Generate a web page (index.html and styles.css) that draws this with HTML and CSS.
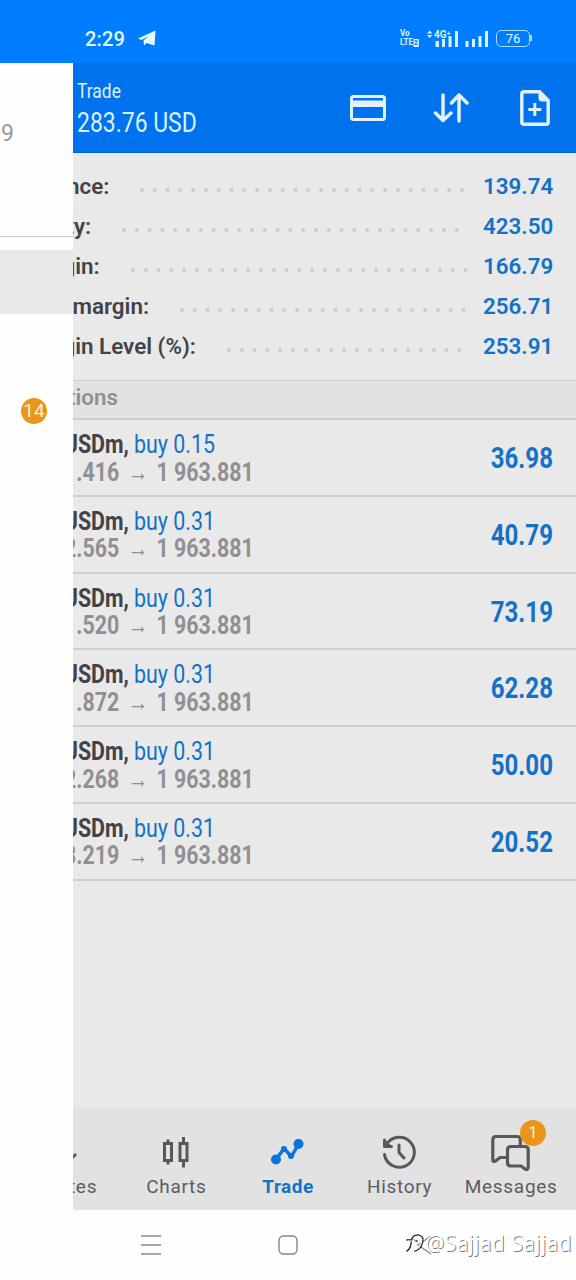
FILE: index.html
```html
<!DOCTYPE html>
<html lang="en">
<head>
    <meta charset="UTF-8">
    <meta name="viewport" content="width=device-width, initial-scale=1.0">
    <title>Trade</title>
    <link rel="stylesheet" href="styles.css">
</head>
<body>
    <div class="phone">
        <div class="status-bar">
            <span class="clock">2:29</span>
            <svg class="telegram" width="18" height="17" viewBox="0 0 18 17"><path d="M0 8.500 17.500 0.500 16.500 15.500 8.500 13 6 15.500 5.500 10.500 11 6 3.500 10Z" fill="#e4fbff"/></svg>
            <div class="status-icons">
                <div class="volte"><span>Vo</span><span>LTE<b>2</b></span></div>
                <svg width="32" height="18" viewBox="0 0 32 18" fill="#d4f4ff">
                    <path d="M0 3.500 2.700 0.500 5.400 3.500ZM0 5 2.700 8 5.400 5Z"/>
                    <text x="7" y="8" class="net">4G⁺</text>
                    <path d="M8.500 11h3.500v6h-3.500zM15 9h3v8h-3zM21.500 6h3v11h-3zM28 1h3v16h-3z"/>
                </svg>
                <svg class="signal" width="24" height="18" viewBox="0 0 24 18" fill="#d4f4ff">
                    <path d="M0.500 11h3v6h-3zM7 9h3v8h-3zM13.500 6h3v11h-3zM20 1h3v16h-3z"/>
                </svg>
                <div class="battery">76</div>
            </div>
        </div>

        <header class="app-bar">
            <div class="title">
                <span class="title-name">Trade</span>
                <span class="title-sum">283.76 USD</span>
            </div>
            <div class="actions">
                <svg width="36" height="28" viewBox="0 0 36 28"><rect x="1.500" y="2.500" width="33" height="23" rx="2" fill="none" stroke="#e2f1ff" stroke-width="3"/><path d="M2 6.500h32v6.500H2z" fill="#e2f1ff"/></svg>
                <svg width="36" height="32" viewBox="0 0 36 32" fill="none" stroke="#e2f1ff" stroke-width="3.500" stroke-linecap="round" stroke-linejoin="round"><path d="M10 3V28.500M2.500 21 10 28.500 18 21M26 29V3M18.500 11 26 3 34 11"/></svg>
                <svg class="new-order" width="30" height="36" viewBox="0 0 30 36"><path d="M4 1.800H19.500L28.200 10.500V32Q28.200 34.200 26 34.200H4Q1.800 34.200 1.800 32V4Q1.800 1.800 4 1.800Z" fill="none" stroke="#e2f1ff" stroke-width="3.400"/><path d="M18.500 2 28 11.500H22Q18.500 11.500 18.500 8Z" fill="#e2f1ff"/><path d="M14.800 13v13M8.300 19.500h13" stroke="#e2f1ff" stroke-width="3"/></svg>
            </div>
        </header>

        <main class="content">
            <section class="summary">
                <div class="summary-row"><span>Balance:</span><i class="dots"></i><b>139.74</b></div>
                <div class="summary-row"><span>Equity:</span><i class="dots"></i><b>423.50</b></div>
                <div class="summary-row"><span>Margin:</span><i class="dots"></i><b>166.79</b></div>
                <div class="summary-row"><span>Free margin:</span><i class="dots"></i><b>256.71</b></div>
                <div class="summary-row"><span>Margin Level (%):</span><i class="dots"></i><b>253.91</b></div>
            </section>

            <h2 class="section-title">tions</h2>

            <section class="positions">
                <div class="position">
                    <div class="deal">
                        <div class="symbol">XAUUSDm, <span>buy 0.15</span></div>
                        <div class="price">1 961.416 <i>→</i> 1 963.881</div>
                    </div>
                    <div class="profit">36.98</div>
                </div>
                <div class="position">
                    <div class="deal">
                        <div class="symbol">XAUUSDm, <span>buy 0.31</span></div>
                        <div class="price">1 962.565 <i>→</i> 1 963.881</div>
                    </div>
                    <div class="profit">40.79</div>
                </div>
                <div class="position">
                    <div class="deal">
                        <div class="symbol">XAUUSDm, <span>buy 0.31</span></div>
                        <div class="price">1 961.520 <i>→</i> 1 963.881</div>
                    </div>
                    <div class="profit">73.19</div>
                </div>
                <div class="position">
                    <div class="deal">
                        <div class="symbol">XAUUSDm, <span>buy 0.31</span></div>
                        <div class="price">1 961.872 <i>→</i> 1 963.881</div>
                    </div>
                    <div class="profit">62.28</div>
                </div>
                <div class="position">
                    <div class="deal">
                        <div class="symbol">XAUUSDm, <span>buy 0.31</span></div>
                        <div class="price">1 962.268 <i>→</i> 1 963.881</div>
                    </div>
                    <div class="profit">50.00</div>
                </div>
                <div class="position">
                    <div class="deal">
                        <div class="symbol">XAUUSDm, <span>buy 0.31</span></div>
                        <div class="price">1 963.219 <i>→</i> 1 963.881</div>
                    </div>
                    <div class="profit">20.52</div>
                </div>
            </section>
        </main>

        <nav class="tabs">
            <div class="tab">
                <svg width="40" height="40" viewBox="0 0 40 40" fill="none" stroke="#58585a" stroke-width="3"><path d="M12 32V8M5 15l7-7 7 7M26 8v20M20.500 22.500l5.500 5.500 6-6"/></svg>
                <span>Quotes</span>
            </div>
            <div class="tab">
                <svg width="40" height="40" viewBox="0 0 40 40" fill="none" stroke="#58585a" stroke-width="3"><path d="M9.500 11.500h7v17h-7zM13 7.500v4M13 28.500v4M25 11.500h7v17h-7zM28.500 5v6.500M28.500 28.500V35.500"/></svg>
                <span>Charts</span>
            </div>
            <div class="tab active">
                <svg width="40" height="40" viewBox="0 0 40 40" fill="#0c72dd"><path d="M9 27.500 17 16.500 24.500 24.500 31.500 12" fill="none" stroke="#0c72dd" stroke-width="3.500" stroke-linejoin="round"/><circle cx="9" cy="27.500" r="5"/><circle cx="17" cy="17" r="3"/><circle cx="24" cy="24" r="3"/><circle cx="31.500" cy="12" r="5"/></svg>
                <span>Trade</span>
            </div>
            <div class="tab">
                <svg width="40" height="40" viewBox="0 0 40 40" fill="none" stroke="#58585a" stroke-width="3" stroke-linecap="round" stroke-linejoin="round"><path d="M5.500 22.500A15 15 0 1 0 7.500 12.500M5.500 8v6.500h7M20 13v7.500l5 5.500"/><path d="M5.500 8v6.500h7z" fill="#58585a" stroke-width="1"/></svg>
                <span>History</span>
            </div>
            <div class="tab">
                <svg width="40" height="40" viewBox="0 0 40 40" fill="none" stroke="#58585a" stroke-width="3.200" stroke-linejoin="round"><path d="M17 25.500H10L5.500 29Q2.800 30.500 2.800 27.500V8Q2.800 4.500 6 4.500H27Q30.300 4.500 30.300 7.500V14.500"/><path d="M21 14.500H35Q38.200 14.500 38.200 18V34.500Q38.200 38.500 35 37L31 34H21Q17.500 34 17.500 31V18Q17.500 14.500 21 14.500Z"/></svg>
                <span>Messages</span>
                <em class="badge tab-badge">1</em>
            </div>
        </nav>

        <div class="system-nav">
            <svg width="20" height="20" viewBox="0 0 20 20" stroke="#8a8a8a" stroke-width="1.600"><path d="M0 1h20M0 10h20M0 19h20"/></svg>
            <svg width="20" height="20" viewBox="0 0 20 20" fill="none" stroke="#858585" stroke-width="1.400"><rect x="1" y="1" width="18" height="18" rx="4.500"/></svg>
            <svg width="20" height="20" viewBox="0 0 20 20" fill="none" stroke="#8a8a8a" stroke-width="1.400"><path d="M16 1 3 10 16 19"/></svg>
        </div>

        <!-- drawer sliding over the trade screen -->
        <aside class="drawer">
            <div class="account">9</div>
            <div class="drawer-item"></div>
            <span class="badge drawer-badge">14</span>
        </aside>

        <div class="watermark">
            <svg width="19" height="20" viewBox="0 0 19 20" fill="none" stroke-linecap="round"><path d="M1 7h7M1 18Q5 16 5.500 8Q6 2 12 2Q18 3 16.500 9Q15 16 9 18M10 8h1" stroke="#222" stroke-width="1.600"/><path d="M2 8h6M2 19Q6 17 6.500 9Q7 3 12 3Q17 4 15.500 9Q14 15 9 17" stroke="#fff" stroke-width="1.200"/></svg>
            <span>@Sajjad Sajjad</span>
        </div>
    </div>
</body>
</html>
```
FILE: styles.css
```css
* {
    box-sizing: border-box;
}
body {
    margin: 0;
    font-family: Roboto, 'Liberation Sans', sans-serif;
    background: #fff;
}
i, em {
    font-style: normal;
}
svg {
    display: block;
    flex: none;
}
.phone {
    position: relative;
    width: 576px;
    height: 1280px;
    display: flex;
    flex-direction: column;
    overflow: hidden;
    background: #fefefe;
}

/* status bar */
.status-bar {
    height: 63px;
    padding: 14px 46px 0 85px;
    display: flex;
    align-items: center;
    background: #007dff;
    color: #e4fbff;
}
.clock {
    width: 53px;
    font-size: 20px;
    font-weight: 500;
    letter-spacing: 0.2px;
}
.status-icons {
    margin-left: auto;
    display: flex;
    align-items: center;
}
.volte {
    display: flex;
    flex-direction: column;
    width: 27px;
    font-size: 9px;
    font-weight: 700;
    line-height: 9px;
    color: #d4f4ff;
}
.volte span {
    transform: scaleX(0.9);
    transform-origin: left;
}
.volte b {
    padding: 0 1px;
    font-size: 7px;
    background: #d4f4ff;
    color: #007dff;
}
.net {
    font-size: 10px;
    font-weight: 700;
}
.signal {
    margin: 0 7px 0 6px;
}
.battery {
    position: relative;
    width: 34px;
    height: 17px;
    border: 1.5px solid #a4dcff;
    border-radius: 5px;
    font-size: 13px;
    line-height: 15px;
    text-align: center;
}
.battery::after {
    content: "";
    position: absolute;
    right: -3px;
    top: 4px;
    width: 2px;
    height: 6px;
    background: #a4dcff;
}

/* header */
.app-bar {
    height: 90px;
    padding: 0 26px 0 77px;
    display: flex;
    justify-content: space-between;
    background: #0072ee;
    border-bottom: 1px solid #0065d4;
    color: #d9f2ff;
}
.title {
    display: flex;
    flex-direction: column;
    padding-top: 15px;
}
.title span {
    transform: scaleX(0.85);
    transform-origin: left;
}
.title-name {
    font-size: 20.5px;
    line-height: 26px;
}
.title-sum {
    font-size: 27px;
    line-height: 38px;
}
.actions {
    display: flex;
    align-items: center;
    gap: 47px;
}
.new-order {
    margin-left: 4px;
}

/* account summary */
.content {
    flex: 1;
    background: #e9e9e9;
}
.summary {
    height: 227px;
    padding: 13px 23px 0;
}
.summary-row {
    height: 40px;
    display: flex;
    font-size: 22.4px;
    font-weight: 600;
    line-height: 40px;
    color: #434347;
}
.summary-row b {
    width: 70px;
    font-weight: 600;
    text-align: left;
    color: #1371c8;
}
.dots {
    flex: 1;
    height: 4px;
    margin: 22px 16px 0 31px;
    background: radial-gradient(circle at 2px 2px, #cdcdcd 1.6px, transparent 2.3px) 0 0 / 12.8px 4px repeat-x;
}
.section-title {
    height: 40px;
    margin: 0;
    padding-left: 68px;
    border-top: 1px solid #cfcfcf;
    border-bottom: 2px solid #cccccc;
    background: #e2e2e2;
    font-size: 22.4px;
    font-weight: 600;
    line-height: 33px;
    color: #909094;
}

/* open positions */
.position {
    height: 76.8px;
    padding: 11px 23px 0 22px;
    display: flex;
    justify-content: space-between;
    border-bottom: 2px solid #cfcfcf;
}
.symbol, .price {
    width: 300px;
    font-size: 25px;
    font-weight: 700;
    line-height: 27.5px;
    white-space: nowrap;
    transform: scaleX(0.855);
    transform-origin: left;
}
.symbol {
    color: #434347;
}
.symbol span {
    font-weight: 400;
    color: #1371c8;
}
.price {
    color: #909094;
}
.price i {
    margin: 0 3px;
}
.profit {
    font-size: 29px;
    font-weight: 700;
    line-height: 54px;
    color: #1371c8;
    transform: scaleX(0.83);
    transform-origin: right;
}

/* bottom tabs */
.tabs {
    height: 103px;
    padding: 0 10px 0 8px;
    display: flex;
    background: #e2e2e2;
}
.tab {
    position: relative;
    flex: 1;
    display: flex;
    flex-direction: column;
    align-items: center;
    padding-top: 25px;
    font-size: 19px;
    letter-spacing: 0.7px;
    color: #5c5c5e;
}
.tab span {
    margin-top: 4px;
    padding-left: 2px;
    line-height: 22px;
}
.tab.active {
    font-weight: 700;
    letter-spacing: 0.5px;
    color: #1371c8;
}
.badge {
    position: absolute;
    width: 26px;
    height: 26px;
    border-radius: 50%;
    background: #ea951c;
    color: #fff3dc;
    text-align: center;
    line-height: 26px;
}
.tab-badge {
    top: 13px;
    right: 20px;
    font-size: 16px;
    letter-spacing: 0;
}
.system-nav {
    height: 70px;
    padding: 0 141px;
    display: flex;
    align-items: center;
    justify-content: space-between;
}

/* drawer */
.drawer {
    position: absolute;
    top: 63px;
    left: 0;
    width: 73px;
    height: 1147px;
    background: #fefefe;
}
.account {
    height: 174px;
    padding: 57px 0 0 1px;
    border-bottom: 1px solid #c4c8c8;
    font-size: 23px;
    line-height: 27px;
    color: #999;
}
.drawer-item {
    height: 64px;
    margin-top: 13px;
    background: #e9e9e9;
}
.drawer-badge {
    top: 335px;
    left: 21px;
    font-size: 19px;
}

.watermark {
    position: absolute;
    right: 4px;
    bottom: 25px;
    display: flex;
    align-items: center;
    font-family: 'Noto Sans', sans-serif;
    font-size: 21px;
    font-weight: 300;
    line-height: 24px;
    letter-spacing: 0.7px;
    color: #fff;
    text-shadow: 1px 1px 0 #777;
}
```
